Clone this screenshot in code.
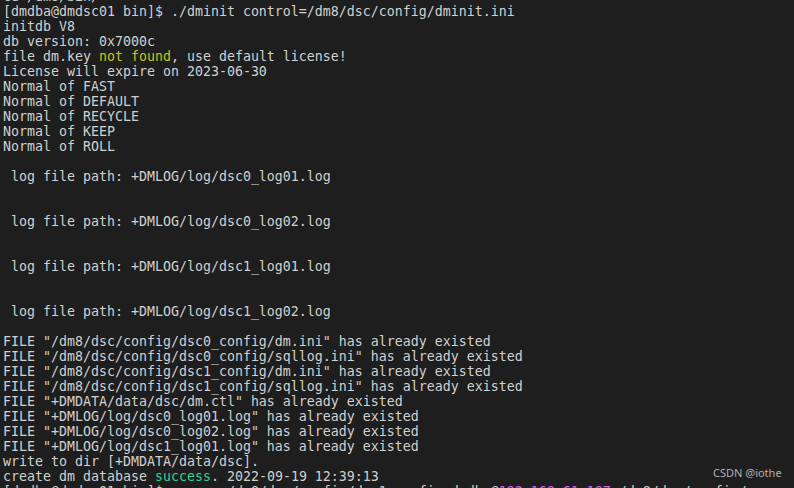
type Seg = { text: string; color?: string }

const Y = 'text-[#c6c41a]'
const G = 'text-[#2ed38d]'
const P = 'text-[#d65ee6]'

const lines: Seg[][] = [
  [{ text: 'cd /dm8/bin/' }],
  [{ text: '[dmdba@dmdsc01 bin]$ ./dminit control=/dm8/dsc/config/dminit.ini' }],
  [{ text: 'initdb V8' }],
  [{ text: 'db version: 0x7000c' }],
  [{ text: 'file dm.key ' }, { text: 'not found', color: Y }, { text: ', use default license!' }],
  [{ text: 'License will expire on 2023-06-30' }],
  [{ text: 'Normal of FAST' }],
  [{ text: 'Normal of DEFAULT' }],
  [{ text: 'Normal of RECYCLE' }],
  [{ text: 'Normal of KEEP' }],
  [{ text: 'Normal of ROLL' }],
  [],
  [{ text: ' log file path: +DMLOG/log/dsc0_log01.log' }],
  [],
  [],
  [{ text: ' log file path: +DMLOG/log/dsc0_log02.log' }],
  [],
  [],
  [{ text: ' log file path: +DMLOG/log/dsc1_log01.log' }],
  [],
  [],
  [{ text: ' log file path: +DMLOG/log/dsc1_log02.log' }],
  [],
  [{ text: 'FILE "/dm8/dsc/config/dsc0_config/dm.ini" has already existed' }],
  [{ text: 'FILE "/dm8/dsc/config/dsc0_config/sqllog.ini" has already existed' }],
  [{ text: 'FILE "/dm8/dsc/config/dsc1_config/dm.ini" has already existed' }],
  [{ text: 'FILE "/dm8/dsc/config/dsc1_config/sqllog.ini" has already existed' }],
  [{ text: 'FILE "+DMDATA/data/dsc/dm.ctl" has already existed' }],
  [{ text: 'FILE "+DMLOG/log/dsc0_log01.log" has already existed' }],
  [{ text: 'FILE "+DMLOG/log/dsc0_log02.log" has already existed' }],
  [{ text: 'FILE "+DMLOG/log/dsc1_log01.log" has already existed' }],
  [{ text: 'write to dir [+DMDATA/data/dsc].' }],
  [{ text: 'create dm database ' }, { text: 'success', color: G }, { text: '. 2022-09-19 12:39:13' }],
  [
    { text: '[dmdba@dmdsc01 bin]$ scp -r /dm8/dsc/config/dsc1_config dmdba@' },
    { text: '192.168.61.187', color: P },
    { text: ':/dm8/dsc/config/' },
  ],
]

export default function App() {
  return (
    <div className="relative w-[794px] h-[488px] overflow-hidden bg-[#1e1e1e]">
      <div className="-mt-[11px] pl-[3px] font-['DejaVu_Sans_Mono',monospace] text-[13.29px] leading-[15px] text-[#d0d0d0]">
        {lines.map((segs, i) => (
          <div key={i} className="h-[15px] whitespace-pre">
            {segs.map((s, j) => (
              <span key={j} className={s.color}>{s.text}</span>
            ))}
          </div>
        ))}
      </div>

      {/* watermark */}
      <div className="absolute left-[713px] top-[466px] font-['Noto_Sans',sans-serif] text-[11px] leading-[14px] text-[#b0b0b0]">
        CSDN @iothe
      </div>
    </div>
  )
}
